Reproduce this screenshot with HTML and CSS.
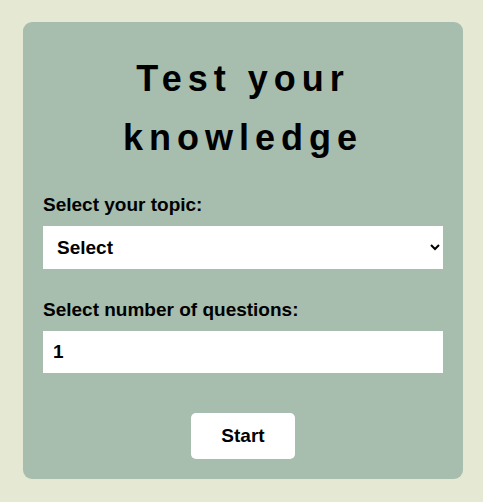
FILE: index.html
```html
<!DOCTYPE html>
<html lang="en">
<head>
<meta charset="utf-8">
<title>Test your knowledge</title>
<link rel="stylesheet" href="styles.css">
</head>
<body>
<main class="card">
  <h1 class="title">Test your knowledge</h1>
  <label class="field-label" for="topic">Select your topic:</label>
  <select class="field select" id="topic">
    <option>Select</option>
    <option>History</option>
    <option>Science</option>
    <option>Geography</option>
  </select>
  <label class="field-label second" for="count">Select number of questions:</label>
  <input class="field input" id="count" type="number" value="1" min="1">
  <div class="actions">
    <button class="start" type="button">Start</button>
  </div>
</main>
</body>
</html>
```
FILE: styles.css
```css
html, body {
  margin: 0;
  padding: 0;
}
body {
  background: #e5e8d2;
  font-family: "Liberation Sans", Arial, sans-serif;
  color: #000;
  padding-top: 22px;
}
.card {
  box-sizing: border-box;
  width: 440px;
  margin-left: 23px;
  background: #a7bdae;
  border-radius: 9px;
  padding: 20px 20px 20px 20px;
  display: flex;
  flex-direction: column;
}
.title {
  margin: 7px 0 27px;
  font-size: 36px;
  line-height: 59px;
  font-weight: bold;
  letter-spacing: 6px;
  text-align: center;
}
.field-label {
  display: block;
  font-size: 19px;
  line-height: 22px;
  font-weight: bold;
  margin-bottom: 10px;
}
.field-label.second {
  margin-top: 30px;
}
.field {
  box-sizing: border-box;
  width: 400px;
  border: none;
  background: #fff;
  font-family: "Liberation Sans", Arial, sans-serif;
  font-size: 19px;
  font-weight: bold;
  color: #000;
  outline: none;
  border-radius: 0;
}
.select {
  height: 43px;
  padding: 0 6px 0 10px;
}
.input {
  height: 42px;
  padding: 10px;
  line-height: 22px;
}
.actions {
  display: flex;
  justify-content: center;
  margin-top: 40px;
}
.start {
  background: #fff;
  border: none;
  border-radius: 5px;
  padding: 12px 30px;
  font-family: "Liberation Sans", Arial, sans-serif;
  font-size: 19px;
  line-height: 22px;
  font-weight: bold;
  color: #000;
  cursor: pointer;
}
```
